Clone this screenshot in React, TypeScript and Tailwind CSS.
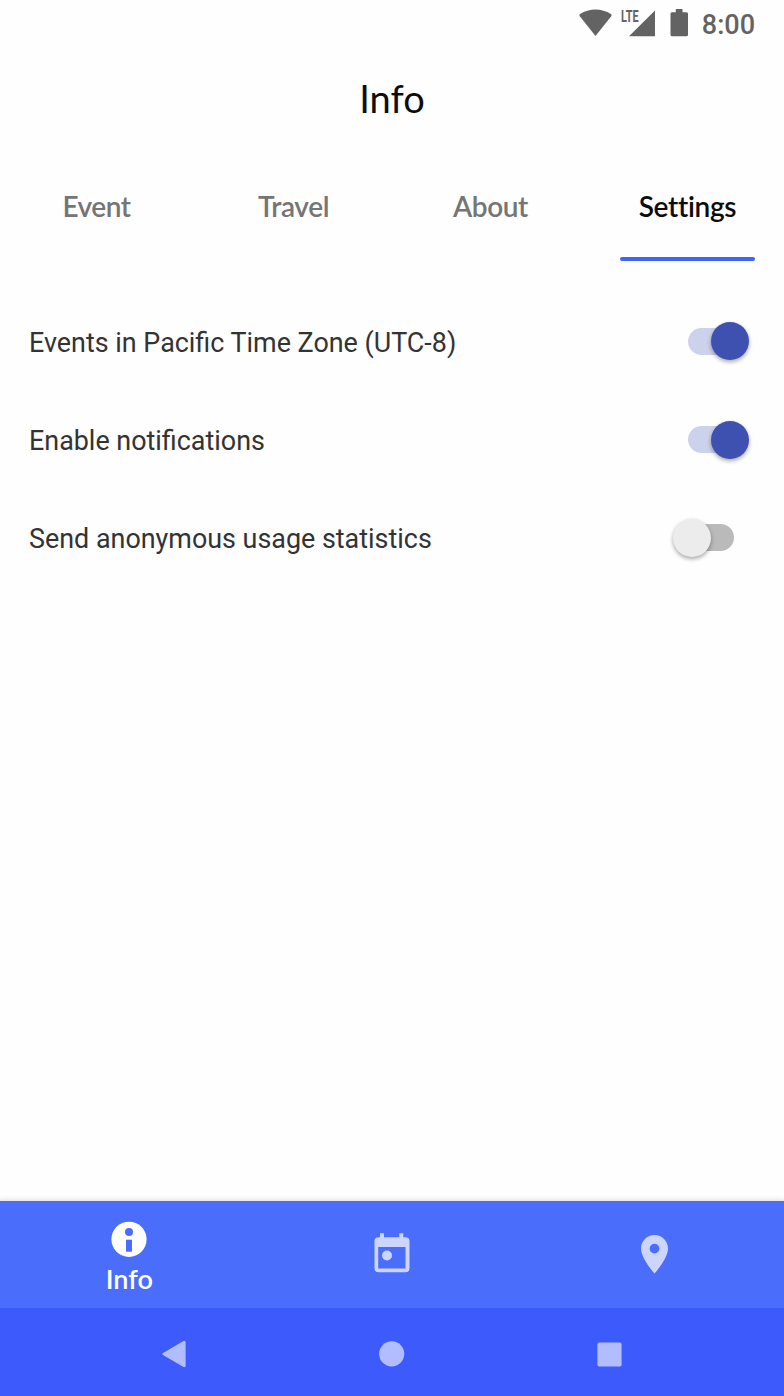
import { useState } from 'react'
import clsx from 'clsx'

const tabs = [
  { label: 'Event', className: 'tracking-[-0.5px]' },
  { label: 'Travel', className: 'tracking-[-0.4px]' },
  { label: 'About', className: 'tracking-[-0.4px]' },
  { label: 'Settings', className: 'tracking-[-0.3px]' },
]

const settings = [
  { id: 'timezone', label: 'Events in Pacific Time Zone (UTC-8)', enabled: true },
  { id: 'notifications', label: 'Enable notifications', enabled: true },
  { id: 'statistics', label: 'Send anonymous usage statistics', enabled: false },
]

function StatusBar() {
  return (
    <div className="flex h-12 items-center justify-end pr-[29px] text-[#636363]">
      <svg width="124" height="48" viewBox="0 0 124 48" fill="currentColor">
        <path d="M16.5 36 0.8 16.2C0.2 15.3 0.3 14.6 1.1 14C10 8 23 8 31.9 14C32.7 14.6 32.8 15.3 32.2 16.2Z" />
        <path d="M50 36.3 76 10.5V36.3Z" />
        <path d="M92.5 12.2H96.8V9H103.5V12.2H107.5Q109 12.2 109 13.7V34.7Q109 36.2 107.5 36.2H93Q91.5 36.2 91.5 34.7V13.7Q91.5 12.2 93 12.2Z" />
        <text
          x="42"
          y="21.8"
          textLength="17.5"
          lengthAdjust="spacingAndGlyphs"
          className="font-[Roboto] text-[16px] font-bold"
        >
          LTE
        </text>
      </svg>
      <span className="ml-[-1px] pt-0.5 text-[27px] leading-[48px] font-medium">8:00</span>
    </div>
  )
}

interface ToggleProps {
  checked: boolean
  onChange: () => void
}

function Toggle({ checked, onChange }: ToggleProps) {
  return (
    <button
      type="button"
      role="switch"
      aria-checked={checked}
      onClick={onChange}
      className="flex h-[39px] w-[77px] items-center"
    >
      <span
        className={clsx(
          'mx-auto flex h-[27px] w-[46px] items-center rounded-full',
          checked ? 'justify-end bg-[#ccd2ec]' : 'justify-start bg-[#bababa]'
        )}
      >
        <span
          className={clsx(
            'size-[38px] shrink-0 rounded-full shadow-[0_2px_4px_rgba(0,0,0,0.35)]',
            checked ? '-mr-[15px] bg-[#3f51b0]' : '-ml-[15px] bg-[#ececec]'
          )}
        />
      </span>
    </button>
  )
}

function BottomNav() {
  return (
    <nav className="-mx-[2px] grid h-[107px] grid-cols-3 bg-[#4a6dfb] shadow-[0_-1px_5px_rgba(0,0,0,0.14)]">
      <button type="button" className="flex flex-col items-center pt-5 text-white">
        <svg width="36" height="36" viewBox="0 0 36 36">
          <circle cx="18" cy="18.3" r="17.6" fill="currentColor" />
          <circle cx="18" cy="10.9" r="4" fill="#4a6dfb" />
          <path d="M15 18.7h6v12h-6z" fill="#4a6dfb" />
        </svg>
        <span className="mt-1.5 font-[Lato] text-[27px] leading-8 font-semibold">Info</span>
      </button>
      <button type="button" className="flex justify-center pt-8 text-[#ccd5fe]">
        <svg width="36" height="40" viewBox="0 0 36 40" fill="currentColor">
          <path
            fillRule="evenodd"
            d="M6 0.3h4v3.9h15.3V0.3h4v3.9H31.5a4 4 0 0 1 4 4V35.3a4 4 0 0 1-4 4H4.5a4 4 0 0 1-4-4V8.2a4 4 0 0 1 4-4H6ZM4.2 14V35.5H31.5V14Z"
          />
          <circle cx="13" cy="22.5" r="5" />
        </svg>
      </button>
      <button type="button" className="flex justify-center pt-[34px] text-[#ccd5fe]">
        <svg width="28" height="39" viewBox="0 0 28 39" fill="currentColor">
          <path
            fillRule="evenodd"
            d="M13.5 0C6 0 0 6 0 13.5C0 23.7 13.5 38.5 13.5 38.5S27 23.7 27 13.5C27 6 21 0 13.5 0ZM13.5 18.5a4.9 4.9 0 1 1 0-9.8a4.9 4.9 0 0 1 0 9.8Z"
          />
        </svg>
      </button>
    </nav>
  )
}

function SystemNav() {
  return (
    <div className="flex h-[88px] items-center justify-between bg-[#3d5bfc] px-[162px] pt-1 text-[#b1bdfe]">
      <svg width="25" height="28" viewBox="0 0 25 28" fill="currentColor">
        <path d="M1 13.1 21.5 1Q23.6 0.4 23.6 2.4V25.6Q23.6 27.6 21.5 27L1 15Q-.3 14 1 13.1Z" />
      </svg>
      <svg width="26" height="26" viewBox="0 0 26 26" fill="currentColor">
        <circle cx="12.7" cy="12.8" r="12.6" />
      </svg>
      <svg width="25" height="25" viewBox="0 0 25 25" fill="currentColor">
        <rect x="0.4" y="0.4" width="24.2" height="24.2" rx="1.8" />
      </svg>
    </div>
  )
}

export default function App() {
  const [activeTab, setActiveTab] = useState('Settings')
  const [values, setValues] = useState(settings.map((s) => s.enabled))

  const toggle = (index: number) => {
    setValues(values.map((v, i) => (i === index ? !v : v)))
  }

  return (
    <div className="flex h-[1396px] w-[784px] flex-col overflow-hidden bg-[#fefefe] font-[Roboto,sans-serif]">
      <StatusBar />

      <h1 className="h-[104px] text-center font-[Lato] text-[38px] leading-[101px] text-[#0c0c0c]">
        Info
      </h1>

      <div className="-mx-[2px] grid h-[109px] grid-cols-4">
        {tabs.map((tab) => (
          <button
            key={tab.label}
            type="button"
            onClick={() => setActiveTab(tab.label)}
            className={clsx(
              'flex flex-col items-center justify-between font-[Lato] text-[28px] leading-[108px] font-semibold',
              tab.label === activeTab ? 'text-[#0c0c0c]' : 'text-[#757575]'
            )}
          >
            <span className={clsx('h-[105px]', tab.className)}>{tab.label}</span>
            {tab.label === activeTab && (
              <span className="h-1 w-[135px] rounded-full bg-[#3f64f8]" />
            )}
          </button>
        ))}
      </div>

      <main className="flex-1 pt-[31px]">
        {settings.map((setting, index) => (
          <div key={setting.id} className="flex h-[98.4px] items-center justify-between pr-[35px] pl-[29px]">
            <span className="pt-[3px] text-[26.9px] text-[#333333]">{setting.label}</span>
            <Toggle checked={values[index]} onChange={() => toggle(index)} />
          </div>
        ))}
      </main>

      <BottomNav />
      <SystemNav />
    </div>
  )
}
